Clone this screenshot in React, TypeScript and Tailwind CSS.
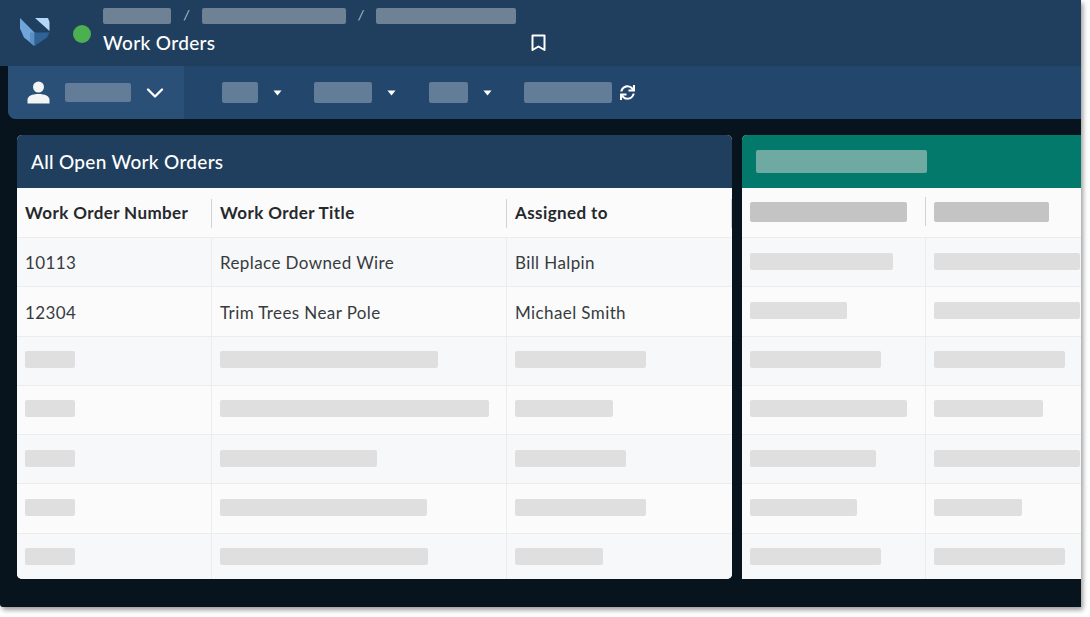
import type { ReactNode } from "react";
import { ChevronDown } from "lucide-react";
import { FaSync } from "react-icons/fa";

const font = "font-['Lato','Liberation_Sans',sans-serif]";

const Bar = ({ w, h, c }: { w: number; h: string; c: string }) => (
  <div className={`${h} ${c} rounded-[2px]`} style={{ width: w }} />
);

const Caret = () => (
  <svg width="9" height="6" viewBox="0 0 9 6" className="ml-[15px]">
    <path d="M0.5 0.5h8L4.5 5.5z" fill="#fff" />
  </svg>
);

const Logo = () => (
  <svg width="30" height="29" viewBox="0 0 30 29">
    <path d="M0 0L14.500 14.500V28L4 19.500L0 10.500z" fill="#6fa5d8" />
    <path d="M10 14.500L14.500 14.500V28L10 24.500z" fill="#5b90c6" />
    <path d="M15 0H28L29.500 4V13z" fill="#b5d8f8" />
    <path d="M14.500 14.500H29.500L27 19.500L14.500 28z" fill="#2f6296" />
  </svg>
);

const rowTint = ["bg-[#fbfbfb]", "bg-[#f7f8f9]"];

const Cell = ({ className, children }: { className: string; children: ReactNode }) => (
  <div className={`flex items-center border-t border-[#ececec] ${className}`}>{children}</div>
);

const HeadCell = ({ className, divider, children }: { className: string; divider?: boolean; children: ReactNode }) => (
  <div className={`flex items-center justify-between ${className}`}>
    {children}
    {divider && <div className="w-px h-[29px] bg-[#d2d2d2]" />}
  </div>
);

const leftRows = [
  [50, 218, 131],
  [50, 269, 98],
  [50, 157, 111],
  [50, 207, 131],
  [50, 208, 88],
];

const rightRows = [
  [143, 146],
  [97, 146],
  [131, 131],
  [157, 109],
  [126, 146],
  [107, 88],
  [131, 131],
];

export default function App() {
  return (
    <div className={`${font} w-[1090px] h-[617px] bg-white overflow-hidden`}>
      <div className="w-[1081px] h-[607px] bg-[#08141d] rounded-bl-[3px] shadow-[2px_3px_5px_rgba(0,0,0,0.4)] flex flex-col overflow-hidden">
        <header className="h-[66px] bg-[#203f5e] flex shrink-0">
          <div className="pl-[20px] pt-[18px] w-[73px]">
            <Logo />
          </div>
          <div className="pt-[25px] w-[30px]">
            <div className="w-[18px] h-[18px] rounded-full bg-[#4caf50]" />
          </div>
          <div className="flex flex-col pt-[8px]">
            <div className="flex items-center h-[16px] text-[13px] text-[#c3ccd6] italic">
              <Bar w={68} h="h-[16px]" c="bg-[#6f8195]" />
              <span className="w-[31px] text-center">/</span>
              <Bar w={144} h="h-[16px]" c="bg-[#6f8195]" />
              <span className="w-[30px] text-center">/</span>
              <Bar w={140} h="h-[16px]" c="bg-[#6f8195]" />
            </div>
            <div className="flex items-center mt-[7px]">
              <h1 className="text-[19px] leading-[24px] font-medium tracking-[0.35px] text-white w-[428px]">Work Orders</h1>
              <svg width="15" height="18" viewBox="0 0 15 18" fill="none" stroke="#fff" strokeWidth="2">
                <path d="M1.500 1.500h12v14.500l-6-3.500-6 3.500z" strokeLinejoin="round" />
              </svg>
            </div>
          </div>
        </header>

        <div className="h-[53px] ml-[8px] bg-[#23466d] rounded-bl-[8px] flex shrink-0 overflow-hidden">
          <div className="w-[176px] bg-[#2a5078] flex items-center pl-[19px]">
            <svg width="23" height="23" viewBox="0 0 23 23" fill="#f2f4f6">
              <circle cx="11.500" cy="6" r="5.500" />
              <path d="M0.500 22.500v-3.500C0.500 15 5 13 11.500 13s11 2 11 6v3.500z" />
            </svg>
            <div className="ml-[15px]">
              <Bar w={66} h="h-[19px]" c="bg-[#637d99]" />
            </div>
            <ChevronDown size={28} strokeWidth={2} className="text-white ml-[10px]" />
          </div>
          <div className="flex items-center pl-[38px]">
            <Bar w={36} h="h-[21px]" c="bg-[#637d99]" />
            <Caret />
            <div className="ml-[32px]">
              <Bar w={58} h="h-[21px]" c="bg-[#637d99]" />
            </div>
            <Caret />
            <div className="ml-[33px]">
              <Bar w={39} h="h-[21px]" c="bg-[#637d99]" />
            </div>
            <Caret />
            <div className="ml-[32px]">
              <Bar w={88} h="h-[21px]" c="bg-[#637d99]" />
            </div>
            <FaSync size={15} className="text-white ml-[8px]" />
          </div>
        </div>

        <div className="flex-1 min-h-0 flex gap-[10px] pl-[17px] pt-[16px] pb-[28px]">
          <section className="w-[715px] rounded-[5px] overflow-hidden flex flex-col bg-[#fbfbfb]">
            <div className="h-[53px] bg-[#203f5e] flex items-center pl-[14px] pt-[2px] text-[19px] font-medium tracking-[0.3px] text-white shrink-0">
              All Open Work Orders
            </div>
            <div className="grid grid-cols-[195px_295px_225px] grid-rows-[49px_repeat(7,49.25px)] text-[#383b3e] text-[17px] tracking-[0.4px]">
              <HeadCell className="pl-[8px] pt-px font-bold text-[#26292c]" divider>Work Order Number</HeadCell>
              <HeadCell className="pl-[8px] pt-px font-bold text-[#26292c]" divider>Work Order Title</HeadCell>
              <HeadCell className="pl-[8px] pt-px font-bold text-[#26292c]" divider>Assigned to</HeadCell>

              <Cell className={`pl-[8px] pt-[2px] border-r ${rowTint[1]}`}>10113</Cell>
              <Cell className={`pl-[8px] pt-[2px] border-r ${rowTint[1]}`}>Replace Downed Wire</Cell>
              <Cell className={`pl-[8px] pt-[2px] ${rowTint[1]}`}>Bill Halpin</Cell>

              <Cell className={`pl-[8px] pt-[2px] border-r ${rowTint[0]}`}>12304</Cell>
              <Cell className={`pl-[8px] pt-[2px] border-r ${rowTint[0]}`}>Trim Trees Near Pole</Cell>
              <Cell className={`pl-[8px] pt-[2px] ${rowTint[0]}`}>Michael Smith</Cell>

              {leftRows.map((row, i) => (
                <div key={i} className="contents">
                  <Cell className={`pl-[8px] pb-[2px] border-r ${rowTint[(i + 1) % 2]}`}>
                    <Bar w={row[0]} h="h-[17px]" c="bg-[#dfdfdf]" />
                  </Cell>
                  <Cell className={`pl-[8px] pb-[2px] border-r ${rowTint[(i + 1) % 2]}`}>
                    <Bar w={row[1]} h="h-[17px]" c="bg-[#dfdfdf]" />
                  </Cell>
                  <Cell className={`pl-[8px] pb-[2px] ${rowTint[(i + 1) % 2]}`}>
                    <Bar w={row[2]} h="h-[17px]" c="bg-[#dfdfdf]" />
                  </Cell>
                </div>
              ))}
            </div>
          </section>

          <section className="flex-1 rounded-tl-[5px] overflow-hidden flex flex-col bg-[#fbfbfb]">
            <div className="h-[53px] bg-[#03796b] flex items-center pl-[14px] shrink-0">
              <Bar w={171} h="h-[23px]" c="bg-[#6eaaa2]" />
            </div>
            <div className="grid grid-cols-[184px_155px] grid-rows-[49px_repeat(7,49.25px)]">
              <HeadCell className="pl-[8px] pb-[2px]" divider>
                <Bar w={157} h="h-[20px]" c="bg-[#c4c4c4]" />
              </HeadCell>
              <HeadCell className="pl-[8px] pb-[2px]">
                <Bar w={115} h="h-[20px]" c="bg-[#c4c4c4]" />
              </HeadCell>
              {rightRows.map((row, i) => (
                <div key={i} className="contents">
                  <Cell className={`pl-[8px] pb-[2px] border-r ${rowTint[(i + 1) % 2]}`}>
                    <Bar w={row[0]} h="h-[17px]" c="bg-[#dfdfdf]" />
                  </Cell>
                  <Cell className={`pl-[8px] pb-[2px] ${rowTint[(i + 1) % 2]}`}>
                    <Bar w={row[1]} h="h-[17px]" c="bg-[#dfdfdf]" />
                  </Cell>
                </div>
              ))}
            </div>
          </section>
        </div>
      </div>
    </div>
  );
}
